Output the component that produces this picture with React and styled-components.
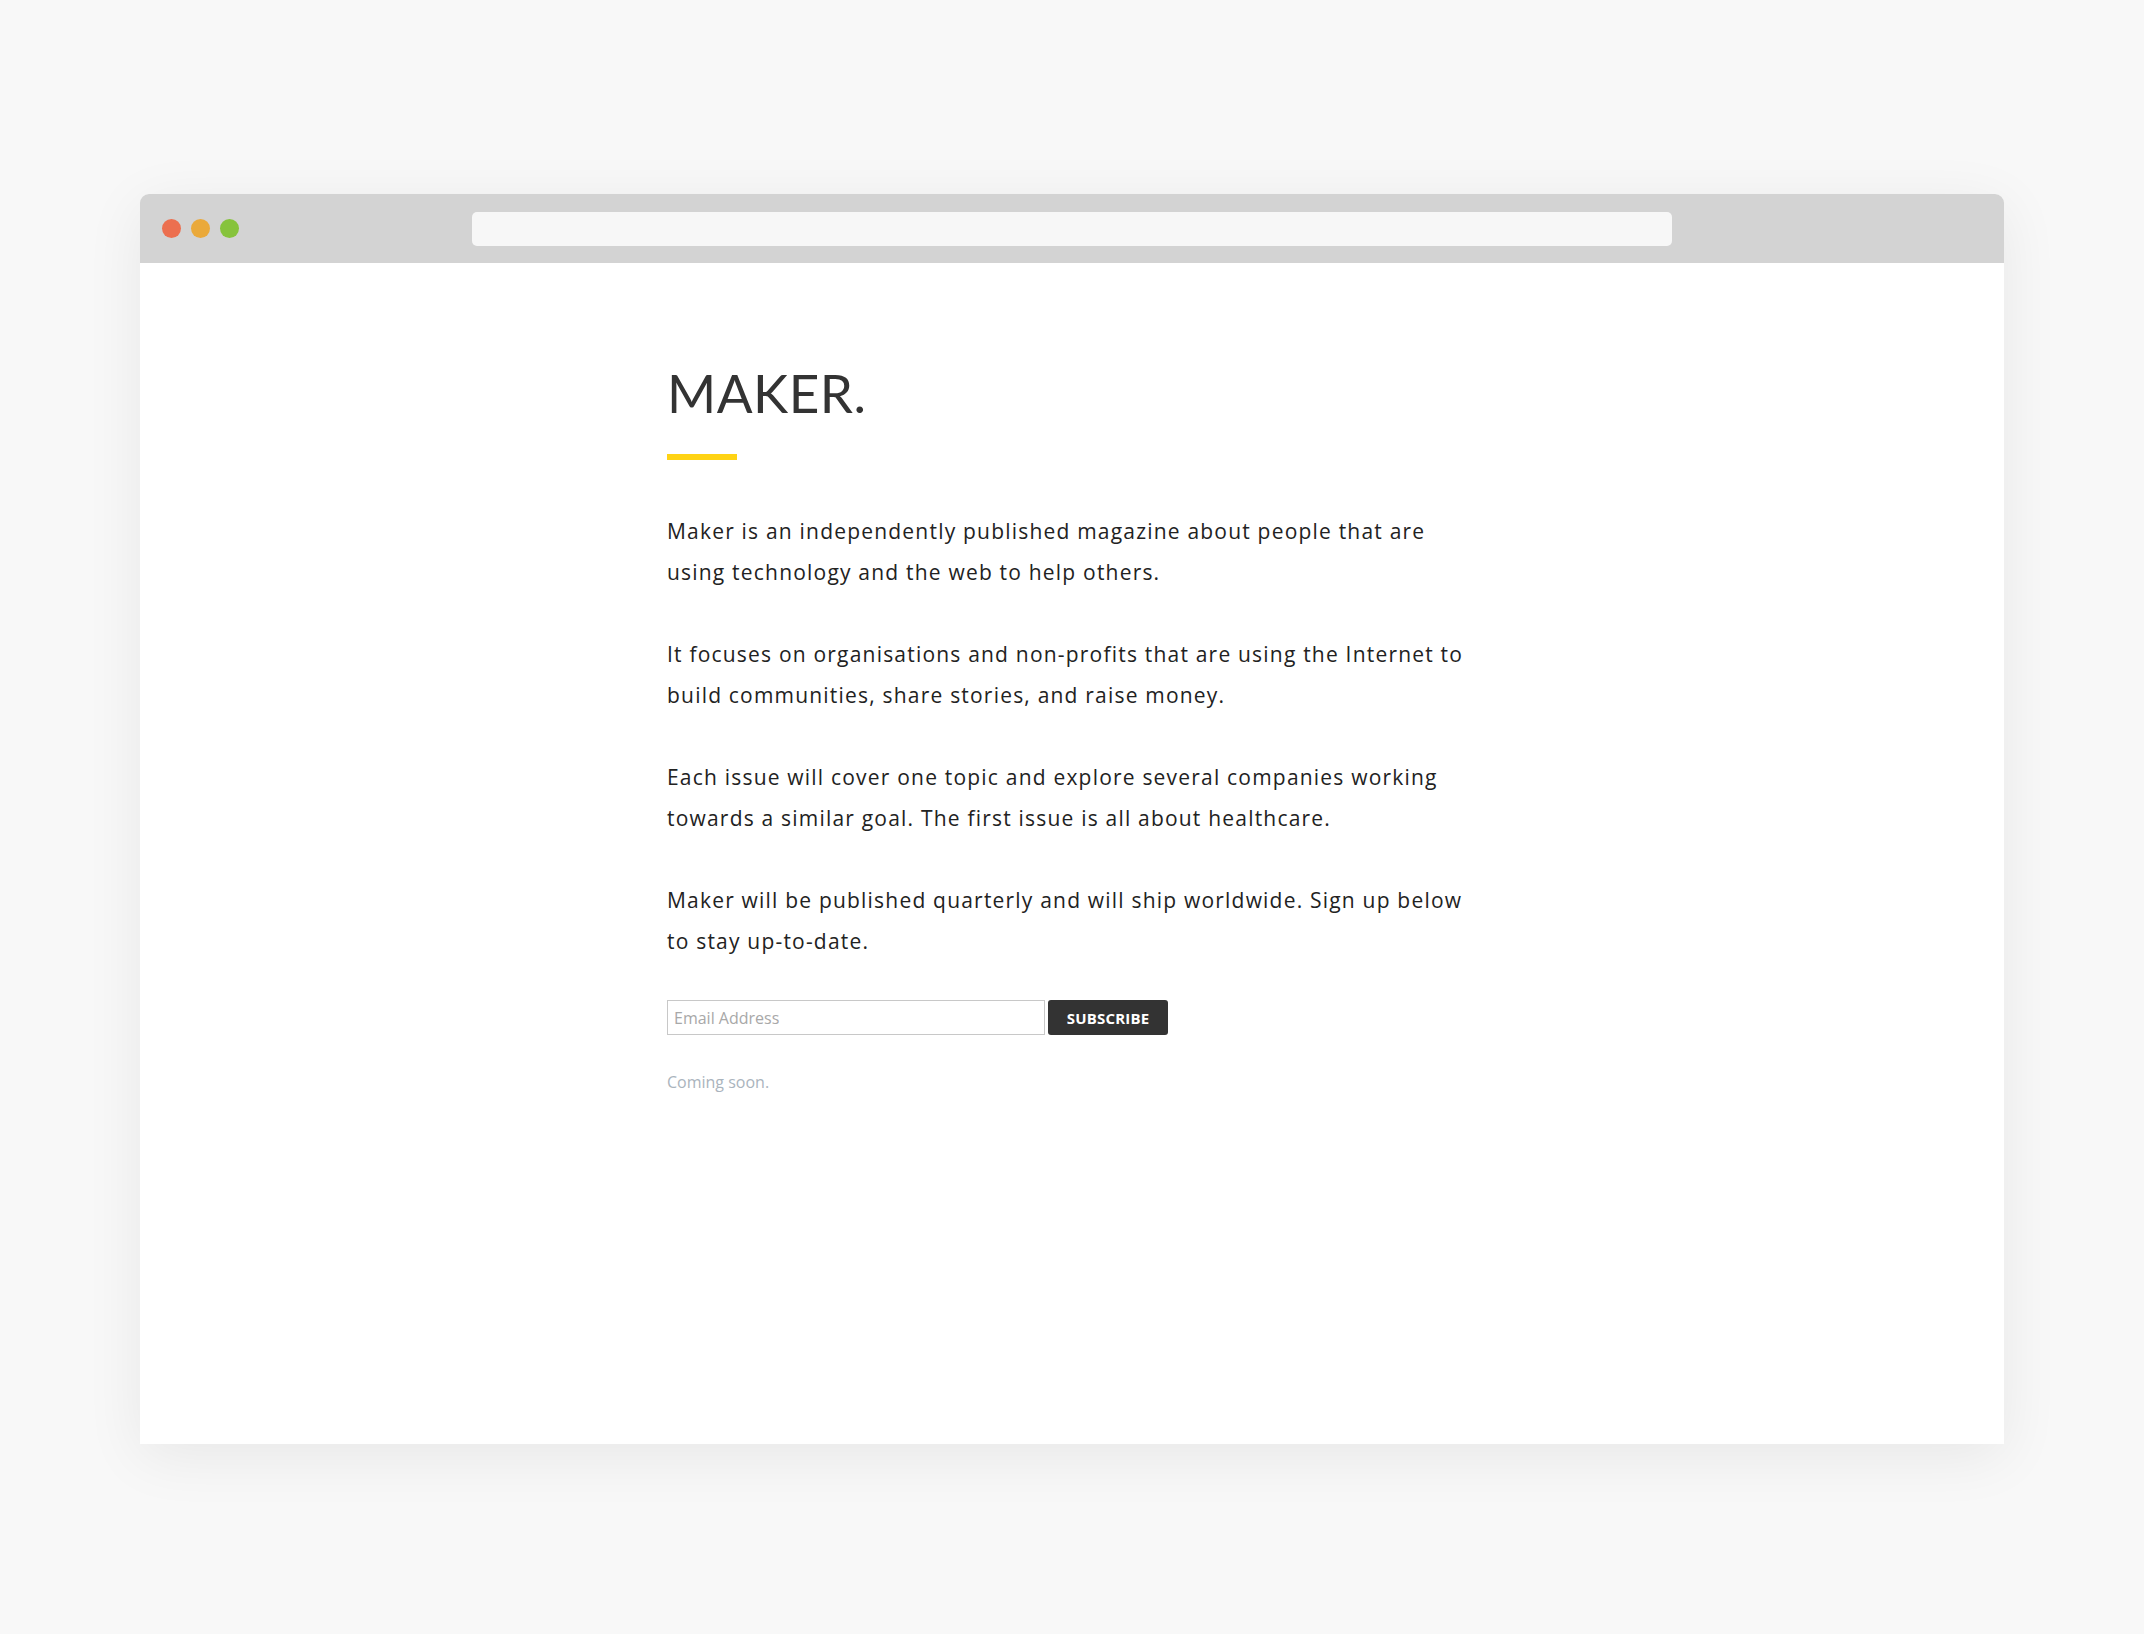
import React from "react";
import styled, { createGlobalStyle } from "styled-components";

const Global = createGlobalStyle`
  html, body { margin: 0; padding: 0; background: #f8f8f8; }
  body { font-family: "Open Sans", sans-serif; }
`;

const Page = styled.div`
  min-height: 1634px;
  padding: 194px 140px 0 140px;
  box-sizing: border-box;
`;

const Window = styled.div`
  width: 1864px;
  height: 1250px;
  background: #fff;
  border-radius: 9px 9px 0 0;
  box-shadow: 0 12px 60px rgba(0, 0, 0, 0.07);
  display: flex;
  flex-direction: column;
  overflow: hidden;
`;

const TitleBar = styled.div`
  height: 69px;
  flex: none;
  background: #d3d3d3;
  display: grid;
  grid-template-columns: 1fr auto 1fr;
  align-items: center;
`;

const Lights = styled.div`
  display: flex;
  gap: 10px;
  padding-left: 22px;
`;

const Light = styled.span`
  width: 19px;
  height: 19px;
  border-radius: 50%;
  background: ${(p) => p.$c};
`;

const AddressBar = styled.div`
  width: 1200px;
  height: 34px;
  border-radius: 5px;
  background: #f7f7f7;
`;

const Content = styled.main`
  width: 810px;
  margin: 0 auto;
  padding-top: 103px;
  display: flex;
  flex-direction: column;
  align-items: flex-start;
`;

const Title = styled.h1`
  margin: 0;
  font-family: "Lato", sans-serif;
  font-weight: 400;
  font-size: 53px;
  line-height: 53px;
  color: #333;
  letter-spacing: 0.5px;
`;

const Rule = styled.div`
  width: 70px;
  height: 6px;
  background: #ffd314;
  margin-top: 35px;
  margin-bottom: 51px;
`;

const Para = styled.p`
  margin: 0 0 ${(p) => (p.$last ? 38 : 41)}px 0;
  font-family: "Open Sans", sans-serif;
  font-size: 21px;
  line-height: 41px;
  letter-spacing: 1.2px;
  color: #222;
  white-space: nowrap;
`;

const Form = styled.form`
  display: flex;
  gap: 3px;
`;

const Input = styled.input`
  width: 378px;
  height: 35px;
  box-sizing: border-box;
  border: 1px solid #c8c8c8;
  padding: 0 6px;
  font-family: "Open Sans", sans-serif;
  font-size: 16px;
  color: #333;
  outline: none;
  &::placeholder { color: #a8a8a8; }
`;

const Button = styled.button`
  width: 120px;
  height: 35px;
  border: none;
  border-radius: 3px;
  background: #333;
  color: #fff;
  font-family: "Open Sans", sans-serif;
  font-weight: 700;
  font-size: 15px;
  letter-spacing: 0.2px;
  padding: 0;
  cursor: pointer;
`;

const Note = styled.p`
  margin: 36px 0 0 0;
  font-family: "Open Sans", sans-serif;
  font-size: 16px;
  color: #aab4bd;
`;

export default function App() {
  return (
    <>
      <Global />
      <Page>
        <Window>
          <TitleBar>
            <Lights>
              <Light $c="#ec6f4f" />
              <Light $c="#eaa93a" />
              <Light $c="#86c33c" />
            </Lights>
            <AddressBar />
          </TitleBar>
          <Content>
            <Title>MAKER.</Title>
            <Rule />
            <Para>
              Maker is an independently published magazine about people that are
              <br />
              using technology and the web to help others.
            </Para>
            <Para>
              It focuses on organisations and non-profits that are using the Internet to
              <br />
              build communities, share stories, and raise money.
            </Para>
            <Para>
              Each issue will cover one topic and explore several companies working
              <br />
              towards a similar goal. The first issue is all about healthcare.
            </Para>
            <Para $last>
              Maker will be published quarterly and will ship worldwide. Sign up below
              <br />
              to stay up-to-date.
            </Para>
            <Form onSubmit={(e) => e.preventDefault()}>
              <Input type="email" placeholder="Email Address" />
              <Button type="submit">SUBSCRIBE</Button>
            </Form>
            <Note>Coming soon.</Note>
          </Content>
        </Window>
      </Page>
    </>
  );
}
